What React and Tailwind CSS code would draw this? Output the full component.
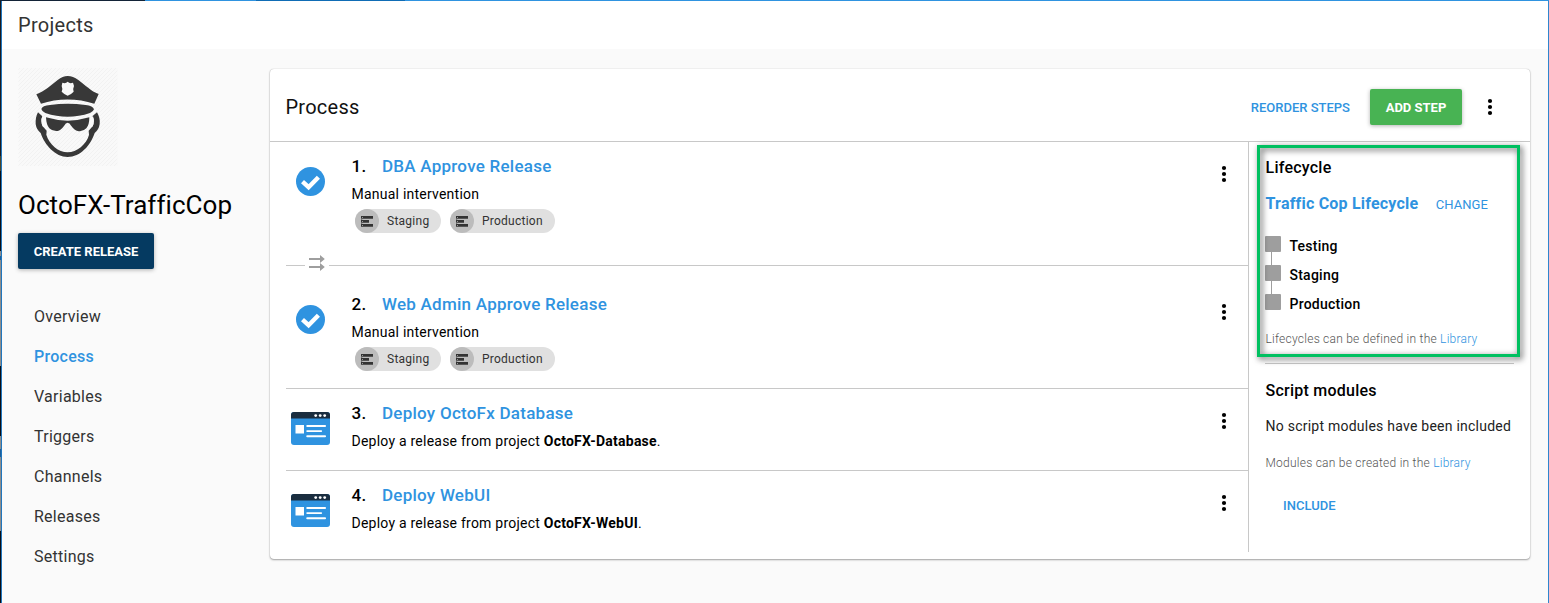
import React from "react";

const NAV = ["Overview", "Process", "Variables", "Triggers", "Channels", "Releases", "Settings"];

function Kebab({ className = "" }) {
  return (
    <svg width="6" height="18" viewBox="0 0 6 18" className={className}>
      <circle cx="3" cy="3" r="2.1" />
      <circle cx="3" cy="9" r="2.1" />
      <circle cx="3" cy="15" r="2.1" />
    </svg>
  );
}

function CheckIcon() {
  return (
    <svg width="29" height="29" viewBox="0 0 29 29">
      <circle cx="14.5" cy="14.5" r="14.5" fill="#2f93e0" />
      <path d="M6.5 14.6 L12.6 20.2 L22.4 10.2" fill="none" stroke="#fff" strokeWidth="4.4" />
    </svg>
  );
}

function DeployIcon() {
  return (
    <svg width="39" height="33" viewBox="0 0 39 33" className="-mt-[2.500px]">
      <rect width="39" height="33" rx="3" fill="#2f93e0" />
      <path d="M0 6.6V3a3 3 0 0 1 3-3h33a3 3 0 0 1 3 3v3.600z" fill="#1a2d3f" />
      <circle cx="24.700" cy="3.600" r="1.400" fill="#fff" />
      <circle cx="29.200" cy="3.600" r="1.400" fill="#fff" />
      <circle cx="33.700" cy="3.600" r="1.400" fill="#fff" />
      <rect x="4.500" y="13" width="8.500" height="8.500" fill="#fff" />
      <path d="M16.200 14h17.900M16.200 19.100h14M16.200 24.300h17.900" stroke="#fff" strokeWidth="1.900" strokeLinecap="round" />
    </svg>
  );
}

function ServerIcon() {
  return (
    <svg width="12" height="11" viewBox="0 0 12 11" className="block">
      <path d="M0 0h12v2.700H0zM0 4h8v2.700H0zM0 8h12v2.700H0z" fill="#333" />
      <path d="M1 1h1v.8H1zM1 4.900h1v.8H1zM1 8.900h1v.8H1z" fill="#bbb" />
      <path d="M0 2.700h1.200v1.300H0zM0 6.700h1.200v1.300H0z" fill="#777" />
    </svg>
  );
}

function ParallelIcon() {
  return (
    <svg width="16" height="16" viewBox="0 0 16 16" fill="#9e9e9e" className="-mt-px block">
      <path d="M0 3.100h11V0l4.800 4-4.800 4V5H0zM0 11.100h11V8l4.800 4-4.800 4v-3H0z" />
    </svg>
  );
}

function CopLogo() {
  return (
    <svg width="102" height="102" viewBox="0 0 306 306" className="block">
      <defs>
        <pattern id="hatch" width="12" height="12" patternUnits="userSpaceOnUse">
          <path d="M-2 14L14 -2M-2 2L2 -2M10 14L14 10" stroke="#f1f1f1" strokeWidth="2.500" />
        </pattern>
      </defs>
      <rect x="1" y="6" width="297" height="294" fill="#f9f9f9" />
      <rect x="1" y="6" width="297" height="294" fill="url(#hatch)" />
      <path
        d="M55 85C80 76 99 57 119 42Q134 30 149 30Q165 30 181 42C202 57 219 76 242 84L229 113C178 96 119 96 69 113Z"
        fill="#383838"
      />
      <path
        d="M133 50Q143 54 149 47Q155 54 165 50L168 60Q164 68 167 77Q162 83 149 89Q136 83 131 77Q135 68 131 60Z"
        fill="#fafafa"
      />
      <path d="M70 129Q73 119 96 117Q149 110 203 117Q225 119 228 130Q227 135 216 141Q149 164 82 141Q72 137 70 129Z" fill="#383838" />
      <path
        d="M60 139L73 151Q67 165 74 181L86 194L85 206C93 235 122 259 149 259C177 259 205 235 213 207L212 194L224 181Q231 165 223 151L237 139Q247 156 245 174Q243 190 230 201C218 238 187 273 149 273C112 273 80 237 68 201Q55 190 53 174Q52 154 60 139Z"
        fill="#383838"
      />
      <path d="M73 151Q67 165 74 181L87 187L85 158Z" fill="#fafafa" />
      <path d="M225 151Q231 165 224 181L211 187L213 158Z" fill="#fafafa" />
      <path d="M84 154Q117 164 149 164Q181 164 214 154Q214 177 205 187Q195 198 179 195Q170 193 160 180Q149 161 138 180Q128 193 119 195Q104 197 94 187Q85 177 84 154Z" fill="#383838" />
    </svg>
  );
}

function Chip({ label }) {
  return (
    <div className="flex h-6 items-center rounded-full bg-[#e0e0e0] pr-3">
      <div className="flex h-6 w-6 items-center justify-center rounded-full bg-[#bcbcbc]">
        <ServerIcon />
      </div>
      <span className="ml-2 text-[12px] leading-6 tracking-[0.26px] text-[#333]">{label}</span>
    </div>
  );
}

function Step({ icon, number, title, children, className = "" }) {
  return (
    <div className={"flex pl-4 " + className}>
      <div className="flex w-[49px] shrink-0 justify-center pt-[13px]">{icon}</div>
      <div className="ml-[16.500px] min-w-0 flex-1">
        <div className="flex text-[17px] font-medium leading-6 tracking-[0.25px]">
          <span className="w-[30.500px]">{number}.</span>
          <a className="text-[#2f93e0]">{title}</a>
        </div>
        <div className="mt-1.5 text-[14px] leading-5 tracking-[0.23px]">{children}</div>
      </div>
      <div className="mr-[21px] pt-[11px]">
        <Kebab />
      </div>
    </div>
  );
}

function Manual(props) {
  return (
    <Step icon={<CheckIcon />} {...props}>
      <div>Manual intervention</div>
      <div className="ml-[3.500px] mt-[5px] flex gap-[8.500px]">
        <Chip label="Staging" />
        <Chip label="Production" />
      </div>
    </Step>
  );
}

function Lifecycle() {
  return (
    <section className="relative h-[221px] pl-[16.500px] pt-[15px]">
      <h3 className="text-[16px] font-medium leading-[22px] tracking-[0.24px]">Lifecycle</h3>
      <div className="mt-3 flex h-[25px] items-center leading-6">
        <a className="text-[16px] font-bold tracking-[0.2px] text-[#2f93e0]">Traffic Cop Lifecycle</a>
        <a className="ml-[17.500px] mt-[2px] text-[13px] tracking-[0.05px] text-[#2f93e0]">CHANGE</a>
      </div>
      <ul className="mt-5">
        {["Testing", "Staging", "Production"].map((phase, i) => (
          <li key={phase} className="-ml-[0.500px] flex h-[29px]">
            <div className="w-4">
              <div className="h-4 w-4 rounded-[1px] bg-[#9e9e9e]" />
              {i < 2 && <div className="ml-1.5 h-[13px] w-px bg-[#9e9e9e]" />}
            </div>
            <span className="ml-[8.500px] text-[14px] font-medium leading-5 tracking-[0.24px]">{phase}</span>
          </li>
        ))}
      </ul>
      <p className="mt-[6px] text-[12px] font-light leading-5 tracking-[0.24px] text-[#555]">
        Lifecycles can be defined in the <a className="text-[#2f93e0]">Library</a>
      </p>
      <div className="pointer-events-none absolute left-2 top-[3px] h-[212px] w-[263px] border-[3px] border-[#00c060] drop-shadow-[2px_2px_3px_rgba(0,0,0,0.7)]" />
    </section>
  );
}

export default function App() {
  return (
    <div className="flex h-[603px] w-[1549px] flex-col overflow-hidden bg-[#fafafa] font-['Roboto',sans-serif] text-black">
      <div className="flex h-px shrink-0">
        <div className="w-[145px] bg-[#132337]" />
        <div className="w-[111px] bg-[#2f93e0]" />
        <div className="w-[149px] bg-[#0f6cb5]" />
        <div className="flex-1 bg-[#2f93e0]" />
      </div>
      <div className="flex min-h-0 flex-1">
        <div className="flex w-px flex-col">
          <div className="h-[155px] bg-[#1c1a1e]" />
          <div className="h-[15px] bg-[#4a4428]" />
          <div className="h-[80px] bg-[#0b0d14]" />
          <div className="h-[5px] bg-[#8d8d8d]" />
          <div className="h-[4px] bg-[#1a5f9c]" />
          <div className="h-[106px] bg-[#8d8d8d]" />
          <div className="h-[70px] bg-[#0b0d14]" />
          <div className="h-[13px] bg-[#8d8d8d]" />
          <div className="h-[8px] bg-[#1a5f9c]" />
          <div className="h-[74px] bg-[#8d8d8d]" />
          <div className="flex-1 bg-[#0b0d14]" />
        </div>
        <div className="w-px bg-[#1f76bd]" />
        <div className="min-w-0 flex-1">
          <header className="h-12 bg-white pl-4 text-[20px] leading-[48px] tracking-[0.3px] text-[#333]">Projects</header>
          <div className="flex">
            <aside className="w-[268px] shrink-0 pl-4 pt-[17px]">
              <CopLogo />
              <h1 className="mt-[21px] text-[26px] leading-8 tracking-[0.05px]">OctoFX-TrafficCop</h1>
              <button className="mt-3 flex h-9 w-[136px] items-center justify-center rounded-[2px] bg-[#053a61] pt-0.5 text-[13px] font-bold text-white shadow-[0_1px_4px_rgba(0,0,0,0.3)]">
                CREATE RELEASE
              </button>
              <nav className="mt-7 flex flex-col pl-4">
                {NAV.map((item) => (
                  <a
                    key={item}
                    className={
                      "h-10 text-[16px] leading-10 tracking-[0.26px] " +
                      (item === "Process" ? "font-medium text-[#2f93e0]" : "text-[#333]")
                    }
                  >
                    {item}
                  </a>
                ))}
              </nav>
            </aside>
            <main className="mt-5 h-[490px] w-[1260px] rounded bg-white shadow-[0_1px_2px_rgba(0,0,0,0.35),0_0_1px_rgba(0,0,0,0.3)]">
              <div className="flex h-[73px] items-center border-b border-[#c8c8c8] pb-px pl-[15.500px]">
                <h2 className="flex-1 pt-1 text-[20px] leading-6 tracking-[0.25px] text-[#111]">Process</h2>
                <a className="pt-1.5 text-[13px] font-medium text-[#2f93e0]">REORDER STEPS</a>
                <button className="ml-5 mt-1 flex h-9 w-[92px] items-center justify-center rounded-[2px] bg-[#48b353] pt-0.5 text-[13px] font-bold text-white shadow-[0_1px_4px_rgba(0,0,0,0.3)]">
                  ADD STEP
                </button>
                <Kebab className="ml-[25px] mr-[37px] mt-1" />
              </div>
              <div className="flex">
                <div className="h-[410px] w-[979px] shrink-0 border-r border-[#c8c8c8]">
                  <Manual number={1} title="DBA Approve Release" className="h-[114px] pt-3" />
                  <div className="flex h-4 pl-4">
                    <div className="mt-[9px] h-px w-[19px] bg-[#c8c8c8]" />
                    <div className="w-6 pl-1">
                      <ParallelIcon />
                    </div>
                    <div className="mt-[9px] h-px flex-1 bg-[#c8c8c8]" />
                  </div>
                  <Manual number={2} title="Web Admin Approve Release" className="h-[116px] pt-5" />
                  <div className="ml-4 h-px bg-[#c8c8c8]" />
                  <Step icon={<DeployIcon />} number={3} title="Deploy OctoFx Database" className="h-[81px] pt-3">
                    Deploy a release from project <b>OctoFX-Database</b>.
                  </Step>
                  <div className="ml-4 h-px bg-[#c8c8c8]" />
                  <Step icon={<DeployIcon />} number={4} title="Deploy WebUI" className="h-[81px] pt-3">
                    Deploy a release from project <b>OctoFX-WebUI</b>.
                  </Step>
                </div>
                <div className="flex-1">
                  <Lifecycle />
                  <div className="ml-4 mr-4 h-px bg-[#c8c8c8]" />
                  <section className="pl-[16.500px] pt-4">
                    <h3 className="text-[16px] font-medium leading-[22px] tracking-[0.24px]">Script modules</h3>
                    <p className="mt-3 whitespace-nowrap text-[14px] leading-6 tracking-[0.24px] text-[#222]">
                      No script modules have been included
                    </p>
                    <p className="mt-[15px] text-[12px] font-light leading-5 tracking-[0.24px] text-[#555]">
                      Modules can be created in the <a className="text-[#2f93e0]">Library</a>
                    </p>
                    <a className="ml-[17.500px] mt-[23px] block text-[13px] font-medium leading-5 text-[#2f93e0]">INCLUDE</a>
                  </section>
                </div>
              </div>
            </main>
          </div>
        </div>
        <div className="w-px bg-[#2f86cf]" />
      </div>
    </div>
  );
}
